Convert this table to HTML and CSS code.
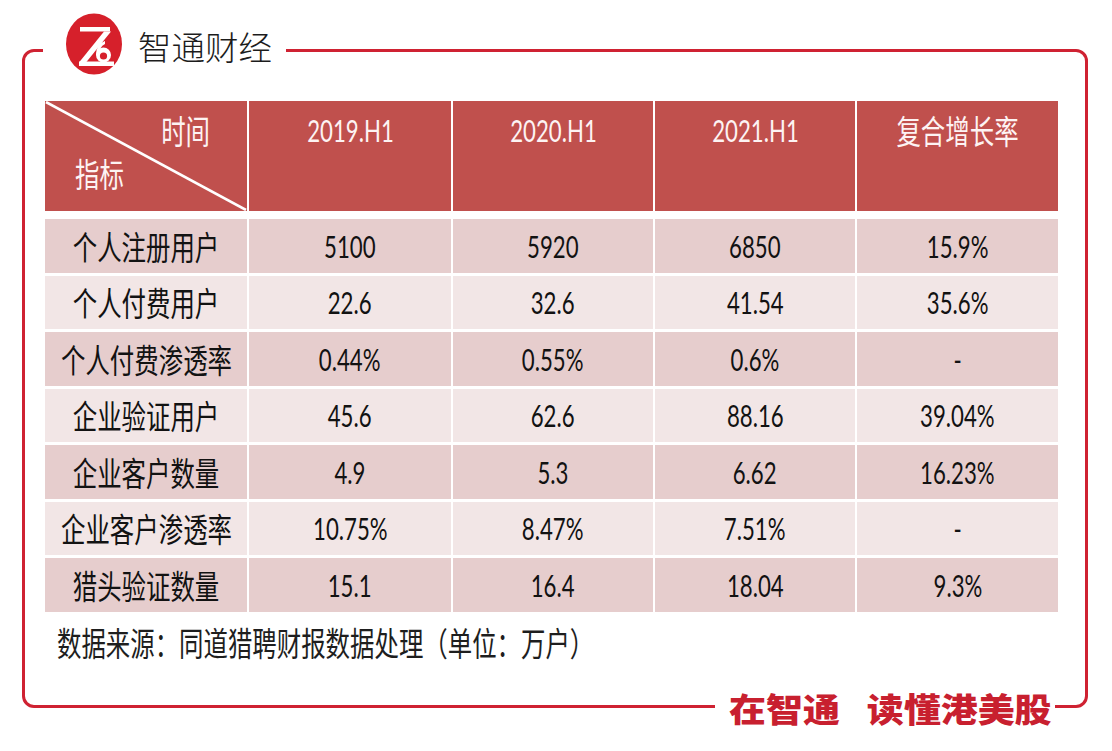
FILE: index.html
```html
<!DOCTYPE html>
<html lang="zh-CN">
<head>
<meta charset="utf-8">
<title>智通财经</title>
<link rel="stylesheet" href="styles.css">
</head>
<body>
<div class="page">
  <div class="frame">
    <div class="brand">
      <svg class="logo" width="58" height="62" viewBox="0 0 58 62" aria-hidden="true">
        <ellipse cx="29" cy="31" rx="28" ry="30.5" fill="#d6202b"/>
        <rect x="15" y="14" width="30" height="4.5" fill="#fff"/>
        <polygon points="39,18.5 46,18.5 21,49.5 14,49.5" fill="#fff"/>
        <rect x="14" y="48.5" width="35" height="4.5" fill="#fff"/>
        <circle cx="38.5" cy="42" r="7.5" fill="#fff"/>
        <circle cx="38.5" cy="43" r="3.6" fill="#d6202b"/>
        <path d="M31 42 Q31 31 40 28 L40 31 Q34 34 34 42 Z" fill="#fff"/>
      </svg>
      <span class="brand-name">智通财经</span>
    </div>

    <div class="table">
      <div class="thead">
        <div class="hcell diag">
          <svg class="diag-line" width="202" height="110" viewBox="0 0 202 110" aria-hidden="true">
            <line x1="1" y1="1" x2="201" y2="109" stroke="#fff" stroke-width="2.6"/>
          </svg>
          <span class="zh h-time">时间</span>
          <span class="zh h-index">指标</span>
        </div>
        <div class="hcell"><span class="num">2019.H1</span></div>
        <div class="hcell"><span class="num">2020.H1</span></div>
        <div class="hcell"><span class="num">2021.H1</span></div>
        <div class="hcell"><span class="zh">复合增长率</span></div>
      </div>

      <div class="tbody">
        <div class="row odd">
          <div class="cell"><span class="zh">个人注册用户</span></div>
          <div class="cell"><span class="num">5100</span></div>
          <div class="cell"><span class="num">5920</span></div>
          <div class="cell"><span class="num">6850</span></div>
          <div class="cell"><span class="num">15.9%</span></div>
        </div>
        <div class="row even">
          <div class="cell"><span class="zh">个人付费用户</span></div>
          <div class="cell"><span class="num">22.6</span></div>
          <div class="cell"><span class="num">32.6</span></div>
          <div class="cell"><span class="num">41.54</span></div>
          <div class="cell"><span class="num">35.6%</span></div>
        </div>
        <div class="row odd">
          <div class="cell"><span class="zh">个人付费渗透率</span></div>
          <div class="cell"><span class="num">0.44%</span></div>
          <div class="cell"><span class="num">0.55%</span></div>
          <div class="cell"><span class="num">0.6%</span></div>
          <div class="cell"><span class="num">-</span></div>
        </div>
        <div class="row even">
          <div class="cell"><span class="zh">企业验证用户</span></div>
          <div class="cell"><span class="num">45.6</span></div>
          <div class="cell"><span class="num">62.6</span></div>
          <div class="cell"><span class="num">88.16</span></div>
          <div class="cell"><span class="num">39.04%</span></div>
        </div>
        <div class="row odd">
          <div class="cell"><span class="zh">企业客户数量</span></div>
          <div class="cell"><span class="num">4.9</span></div>
          <div class="cell"><span class="num">5.3</span></div>
          <div class="cell"><span class="num">6.62</span></div>
          <div class="cell"><span class="num">16.23%</span></div>
        </div>
        <div class="row even">
          <div class="cell"><span class="zh">企业客户渗透率</span></div>
          <div class="cell"><span class="num">10.75%</span></div>
          <div class="cell"><span class="num">8.47%</span></div>
          <div class="cell"><span class="num">7.51%</span></div>
          <div class="cell"><span class="num">-</span></div>
        </div>
        <div class="row odd">
          <div class="cell"><span class="zh">猎头验证数量</span></div>
          <div class="cell"><span class="num">15.1</span></div>
          <div class="cell"><span class="num">16.4</span></div>
          <div class="cell"><span class="num">18.04</span></div>
          <div class="cell"><span class="num">9.3%</span></div>
        </div>
      </div>
    </div>

    <p class="source"><span class="zh">数据来源：同道猎聘财报数据处理（单位：万户）</span></p>

    <div class="slogan"><span class="slogan-text"><span class="slogan-a">在智通</span>读懂港美股</span></div>
  </div>
</div>
</body>
</html>
```

FILE: styles.css
```css
* { box-sizing: border-box; }

html, body {
  margin: 0;
  padding: 0;
  background: #ffffff;
}

.page {
  width: 1112px;
  height: 751px;
  padding: 49px 0 0 22px;
  overflow: hidden;
  font-family: "Noto Sans CJK SC", "Noto Sans", sans-serif;
}

.frame {
  position: relative;
  width: 1066px;
  height: 659px;
  border: 3px solid #cf2232;
  border-radius: 12px;
  padding: 49px 0 0 20px;
}

/* brand over top border */
.brand {
  position: absolute;
  left: 18px;
  top: -39px;
  height: 62px;
  display: flex;
  align-items: center;
  gap: 15px;
  padding: 0 14px 0 22px;
  background: #ffffff;
}

.logo { display: block; }

.brand-name {
  font-family: "Noto Sans CJK SC", sans-serif;
  font-size: 33.5px;
  line-height: 40px;
  color: #1c1c1c;
  font-weight: 300;
  margin-top: 4px;
}

/* table */
.table {
  width: 1013px;
}

.thead {
  display: grid;
  grid-template-columns: 202px 202px 200px 200px 201px;
  column-gap: 2px;
  height: 110px;
  margin-bottom: 8px;
}

.hcell {
  background: #c0504d;
  color: #fdf3f3;
  display: flex;
  justify-content: center;
  align-items: flex-start;
  padding-top: 11px;
}

.hcell.diag {
  position: relative;
  flex-direction: column;
  align-items: stretch;
  justify-content: flex-start;
  gap: 7px;
}

.diag-line {
  position: absolute;
  left: 0;
  top: 0;
}

.h-time {
  align-self: flex-end;
  margin-right: 37px;
  transform-origin: right center;
}

.h-index {
  align-self: flex-start;
  margin-left: 30px;
  transform-origin: left center;
}

.tbody {
  display: flex;
  flex-direction: column;
  gap: 3px;
}

.row {
  display: grid;
  grid-template-columns: 202px 202px 200px 200px 201px;
  column-gap: 2px;
  height: 53.5px;
}

.row.odd .cell { background: #e6cdcd; }
.row.even .cell { background: #f2e6e6; }

.cell {
  display: flex;
  align-items: center;
  justify-content: center;
  color: #121212;
  white-space: nowrap;
}

.zh {
  display: inline-block;
  font-family: "Noto Sans CJK SC", sans-serif;
  font-size: 33px;
  line-height: 36px;
  white-space: nowrap;
  transform: scaleX(0.74);
}

.num {
  display: inline-block;
  font-family: "Lato", "Liberation Sans", sans-serif;
  font-size: 30px;
  line-height: 36px;
  white-space: nowrap;
  transform: scaleX(0.74);
}

.source {
  margin: 12px 0 0 12px;
  color: #1e1e1e;
}

.source .zh {
  transform-origin: left center;
}

/* slogan over bottom border */
.slogan {
  position: absolute;
  left: 690px;
  bottom: -23px;
  width: 340px;
  height: 40px;
  padding-left: 14px;
  background: #ffffff;
  display: flex;
  align-items: center;
}

.slogan-text {
  display: inline-block;
  font-family: "Noto Sans CJK SC", sans-serif;
  font-weight: 900;
  font-size: 33px;
  line-height: 40px;
  color: #c8202f;
  white-space: nowrap;
  transform: scaleX(1.12);
  transform-origin: left center;
}

.slogan-a {
  margin-right: 24px;
}
```
